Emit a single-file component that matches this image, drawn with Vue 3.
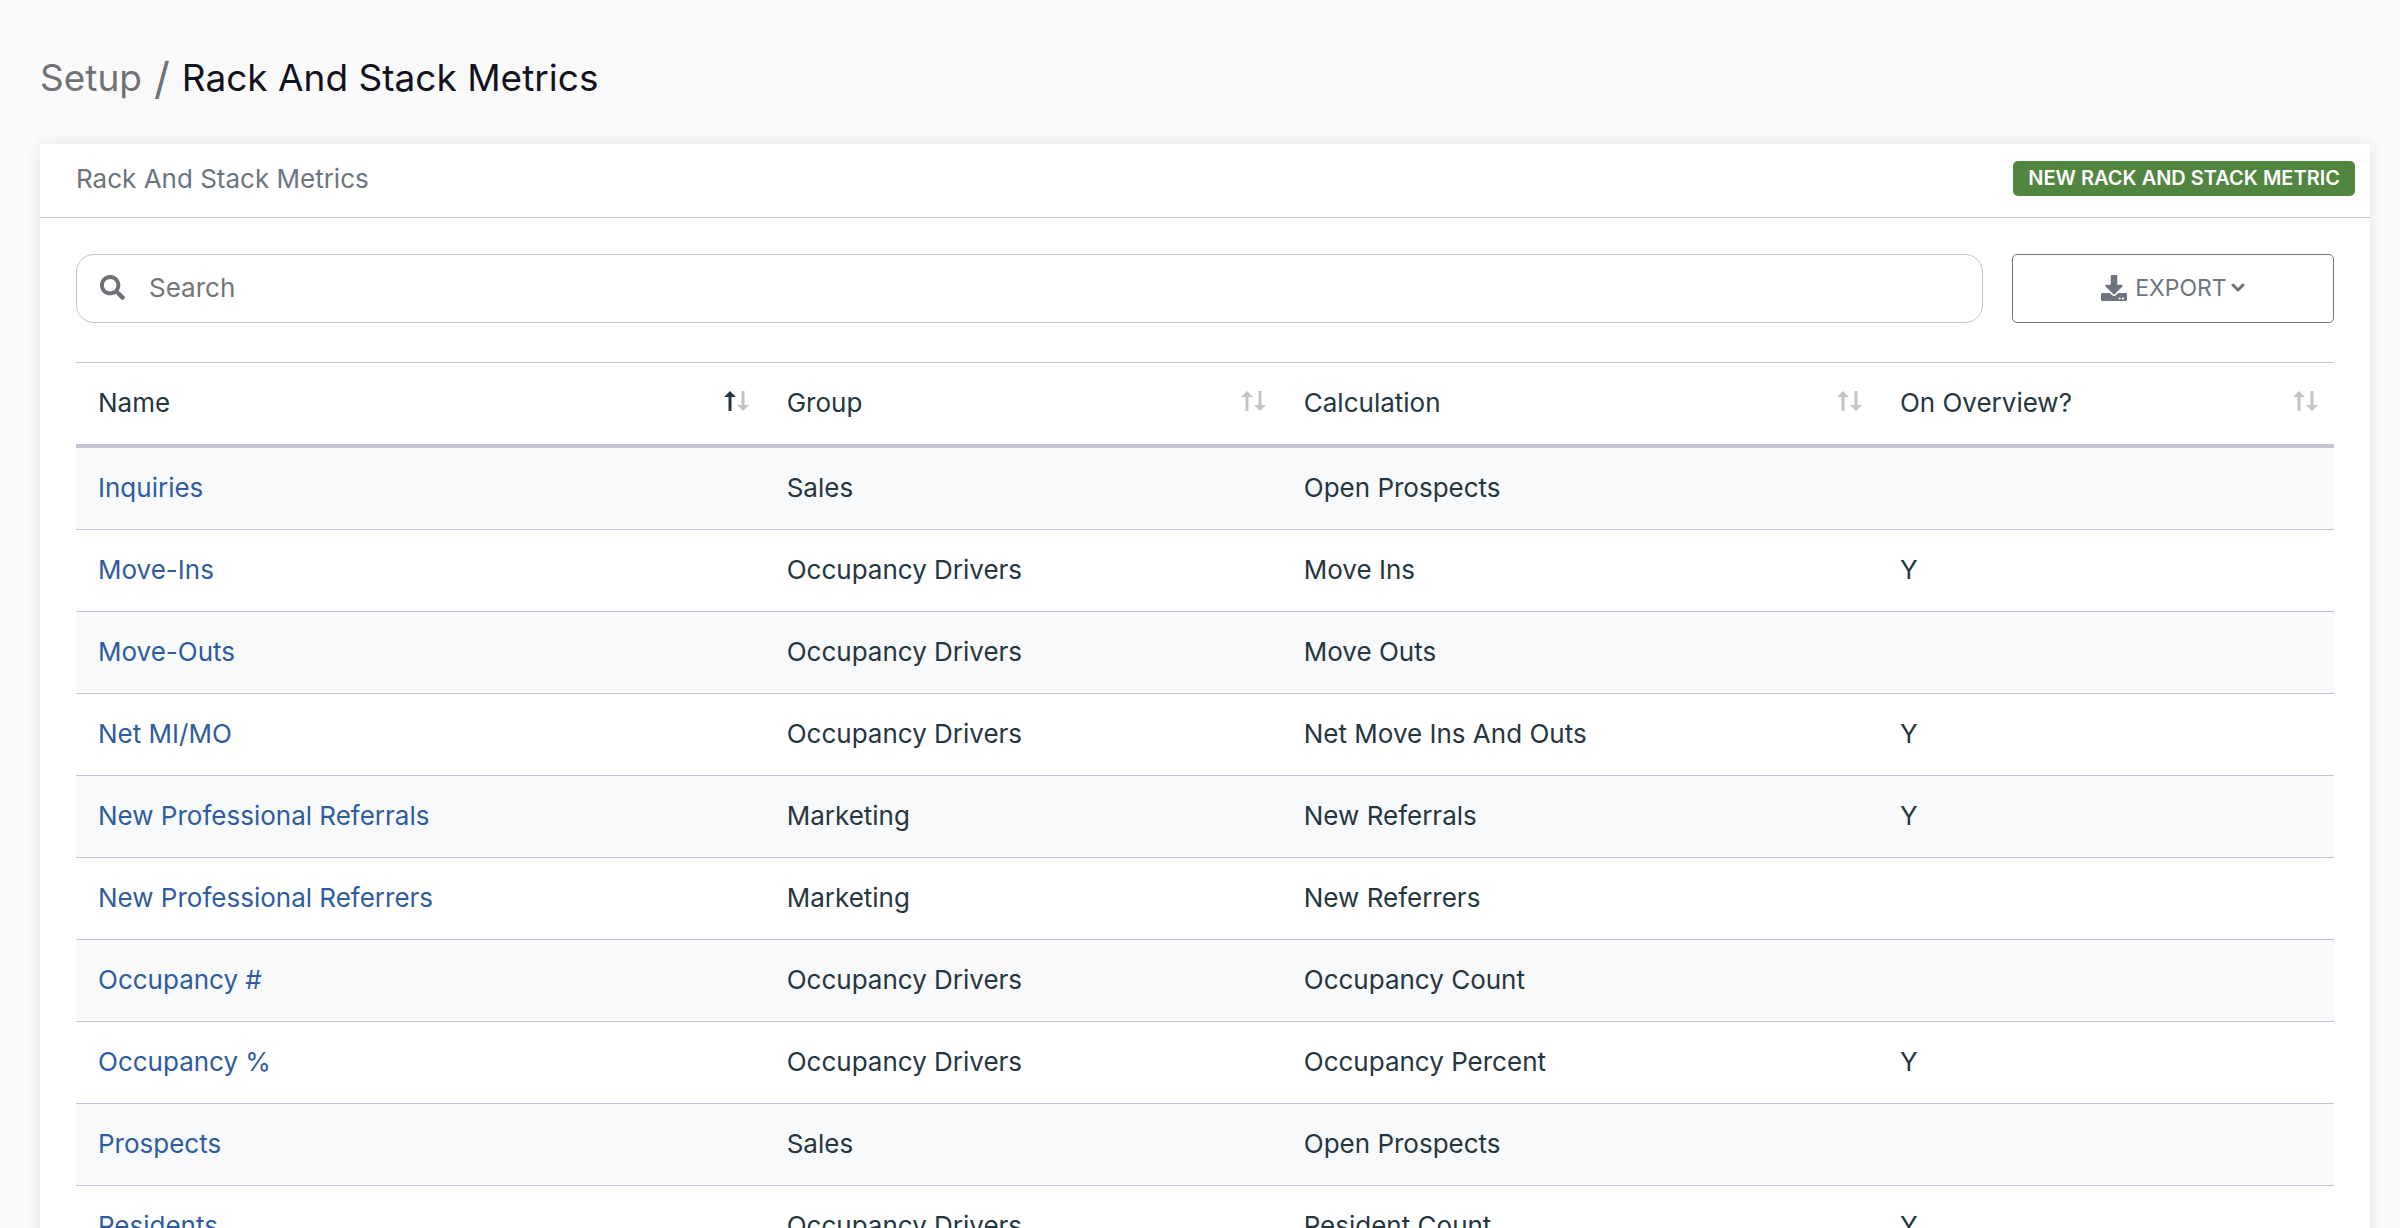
<script setup>
import { ref } from 'vue'

const search = ref('')

const columns = [
  { key: 'name', label: 'Name', sorted: true },
  { key: 'group', label: 'Group', sorted: false },
  { key: 'calculation', label: 'Calculation', sorted: false },
  { key: 'overview', label: 'On Overview?', sorted: false },
]

const metrics = [
  { name: 'Inquiries', group: 'Sales', calculation: 'Open Prospects', overview: '' },
  { name: 'Move-Ins', group: 'Occupancy Drivers', calculation: 'Move Ins', overview: 'Y' },
  { name: 'Move-Outs', group: 'Occupancy Drivers', calculation: 'Move Outs', overview: '' },
  { name: 'Net MI/MO', group: 'Occupancy Drivers', calculation: 'Net Move Ins And Outs', overview: 'Y' },
  { name: 'New Professional Referrals', group: 'Marketing', calculation: 'New Referrals', overview: 'Y' },
  { name: 'New Professional Referrers', group: 'Marketing', calculation: 'New Referrers', overview: '' },
  { name: 'Occupancy #', group: 'Occupancy Drivers', calculation: 'Occupancy Count', overview: '' },
  { name: 'Occupancy %', group: 'Occupancy Drivers', calculation: 'Occupancy Percent', overview: 'Y' },
  { name: 'Prospects', group: 'Sales', calculation: 'Open Prospects', overview: '' },
  { name: 'Residents', group: 'Occupancy Drivers', calculation: 'Resident Count', overview: 'Y' },
]
</script>

<template>
  <main class="page">
    <h1 class="crumbs">
      <a class="crumb" href="#">Setup</a>
      <span class="slash">/</span>
      <span>Rack And Stack Metrics</span>
    </h1>

    <section class="card">
      <header class="card-header">
        <h2 class="card-title">Rack And Stack Metrics</h2>
        <button class="new-button" type="button">NEW RACK AND STACK METRIC</button>
      </header>

      <div class="card-body">
        <div class="toolbar">
          <label class="search">
            <svg class="search-icon" viewBox="0 0 512 512" aria-hidden="true">
              <path d="M505 442.7L405.3 343c-4.5-4.5-10.6-7-17-7H372c27.6-35.3 44-79.7 44-128C416 93.1 322.9 0 208 0S0 93.1 0 208s93.1 208 208 208c48.3 0 92.7-16.4 128-44v16.3c0 6.4 2.5 12.5 7 17l99.7 99.7c9.4 9.4 24.6 9.4 33.9 0l28.3-28.3c9.4-9.4 9.4-24.6.1-34zM208 336c-70.7 0-128-57.2-128-128 0-70.7 57.2-128 128-128 70.7 0 128 57.2 128 128 0 70.7-57.2 128-128 128z" />
            </svg>
            <input v-model="search" class="search-input" type="text" placeholder="Search" aria-label="Search" />
          </label>
          <button class="export-button" type="button">
            <svg class="download-icon" viewBox="0 0 512 512" aria-hidden="true">
              <path d="M216 0h80c13.3 0 24 10.7 24 24v168h87.7c17.8 0 26.7 21.5 14.1 34.1L269.7 378.3c-7.5 7.5-19.8 7.5-27.3 0L90.1 226.1c-12.6-12.6-3.7-34.1 14.1-34.1H192V24c0-13.3 10.7-24 24-24zm296 376v112c0 13.3-10.7 24-24 24H24c-13.3 0-24-10.7-24-24V376c0-13.3 10.7-24 24-24h146.7l49 49c20.1 20.1 52.5 20.1 72.6 0l49-49H488c13.3 0 24 10.7 24 24zm-124 88c0-11-9-20-20-20s-20 9-20 20 9 20 20 20 20-9 20-20zm64 0c0-11-9-20-20-20s-20 9-20 20 9 20 20 20 20-9 20-20z" />
            </svg>
            <span>EXPORT</span>
            <svg class="chevron-icon" viewBox="0 0 14 10" aria-hidden="true">
              <path d="M2 2l5 5 5-5" />
            </svg>
          </button>
        </div>

        <table class="metrics">
          <colgroup>
            <col v-for="column in columns" :key="column.key" :class="'col-' + column.key" />
          </colgroup>
          <thead>
            <tr>
              <th v-for="column in columns" :key="column.key" scope="col">
                <div class="heading">
                  <span>{{ column.label }}</span>
                  <svg class="sort-icon" viewBox="0 0 25 20" aria-hidden="true">
                    <path :class="['arrow', { active: column.sorted }]" d="M6 0l6 6H7.500v14h-3V6H0z" />
                    <path class="arrow" d="M19 20l-6-6h4.500V0h3v14H25z" />
                  </svg>
                </div>
              </th>
            </tr>
          </thead>
          <tbody>
            <tr v-for="metric in metrics" :key="metric.name">
              <td><a class="metric-link" href="#">{{ metric.name }}</a></td>
              <td>{{ metric.group }}</td>
              <td>{{ metric.calculation }}</td>
              <td>{{ metric.overview }}</td>
            </tr>
          </tbody>
        </table>
      </div>
    </section>
  </main>
</template>

<style>
body {
  margin: 0;
  background: #fafafa;
}
</style>

<style scoped>
.page {
  box-sizing: border-box;
  height: 100vh;
  overflow: hidden;
  padding: 48px 30px 0 40px;
  background: #fafafa;
  color: #263640;
  font-family: Inter, "Open Sans", sans-serif;
  font-size: 26px;
  line-height: 36px;
}

.crumbs {
  display: flex;
  align-items: center;
  gap: 12px;
  margin: 0 0 36px;
  color: #12121f;
  font-size: 37px;
  font-weight: 400;
  line-height: 60px;
}

.crumb,
.slash {
  color: #717178;
  text-decoration: none;
}

.slash {
  font-size: 44px;
}

.card {
  background: #fff;
  box-shadow: 0 0 14px rgba(0, 0, 0, 0.09);
}

.card-header {
  display: flex;
  align-items: center;
  justify-content: space-between;
  box-sizing: border-box;
  height: 74px;
  padding: 0 15px 4px 36px;
  border-bottom: 1px solid #c4c3d3;
}

.card-title {
  margin: 0;
  color: #6c757d;
  font-size: 26px;
  font-weight: 400;
}

.new-button {
  height: 35px;
  padding: 0 15px;
  border: 0;
  border-radius: 5px;
  background: #50863f;
  color: #fff;
  font-family: inherit;
  font-size: 20px;
  font-weight: 600;
  line-height: 35px;
}

.card-body {
  padding: 36px;
}

.toolbar {
  display: flex;
  gap: 29px;
  margin-bottom: 39px;
}

.search {
  box-sizing: border-box;
  display: flex;
  flex: 1;
  align-items: center;
  gap: 24px;
  height: 69px;
  padding: 0 23px 2px;
  border: 1px solid #c4c3d3;
  border-radius: 18px;
}

.search-icon {
  width: 25px;
  height: 25px;
  fill: #6f6f77;
}

.search-input {
  flex: 1;
  padding: 0;
  border: 0;
  outline: 0;
  background: transparent;
  color: #263640;
  font: inherit;
}

.search-input::placeholder {
  color: #757575;
  opacity: 1;
}

.export-button {
  display: flex;
  align-items: center;
  justify-content: center;
  box-sizing: border-box;
  width: 322px;
  height: 69px;
  padding: 0 0 2px;
  border: 1px solid #6c757d;
  border-radius: 5px;
  background: #fff;
  color: #6c757d;
  font: inherit;
  font-size: 23px;
}

.download-icon {
  width: 26px;
  height: 26px;
  margin-right: 8px;
  fill: currentColor;
}

.chevron-icon {
  width: 14px;
  height: 10px;
  margin-left: 4px;
  fill: none;
  stroke: currentColor;
  stroke-width: 3;
  stroke-linecap: round;
  stroke-linejoin: round;
}

.metrics {
  width: 100%;
  border-spacing: 0;
  border-top: 1px solid #c4c3d3;
  table-layout: fixed;
}

.col-name {
  width: 30.5%;
}

.col-group {
  width: 22.9%;
}

.col-calculation {
  width: 26.4%;
}

.metrics th,
.metrics td {
  box-sizing: border-box;
  height: 82px;
  padding: 0 22px 2px;
  border-bottom: 1px solid #c4c3d3;
  font-weight: 400;
  text-align: left;
  vertical-align: middle;
}

.metrics th {
  height: 85px;
  padding-right: 16px;
  border-bottom-width: 4px;
}

.metrics tbody tr:nth-child(odd) {
  background: #f8f9fb;
}

.heading {
  display: flex;
  align-items: center;
  justify-content: space-between;
}

.sort-icon {
  width: 25px;
  height: 20px;
  margin-bottom: 4px;
}

.arrow {
  fill: #c0c4c8;
}

.arrow.active {
  fill: #263640;
}

.metric-link {
  color: #2f5c9e;
  text-decoration: none;
}
</style>
